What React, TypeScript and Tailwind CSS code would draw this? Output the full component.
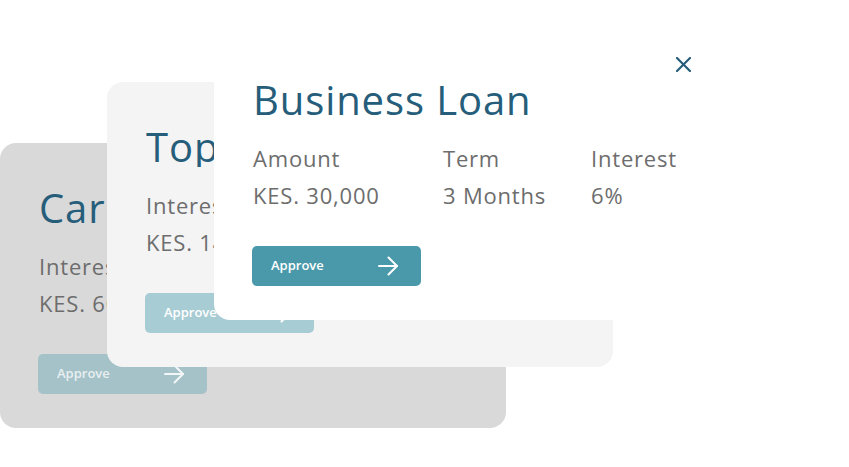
import React from "react";

type Col = { label: string; value: string; w: string };

function Arrow({ color }: { color: string }) {
  return (
    <svg width="20" height="20" viewBox="0 0 20 20" fill="none" stroke={color} strokeWidth="2" strokeLinecap="round" strokeLinejoin="round">
      <path d="M1 10h18" />
      <path d="M10.5 1.5 19 10l-8.5 8.5" />
    </svg>
  );
}

function Card({
  title,
  cols,
  cardClass,
  btnClass,
  btnText,
  arrow,
  close,
  clip,
}: {
  title: string;
  cols: Col[];
  cardClass: string;
  btnClass: string;
  btnText: string;
  arrow: string;
  close?: boolean;
  clip?: boolean;
}) {
  return (
    <div className={`absolute w-[506px] h-[285px] rounded-[16px] pl-[39px] pt-[45px] ${cardClass}`}>
      {close && (
        <div className="absolute left-[462px] top-[22px]">
          <svg width="15" height="15" viewBox="0 0 15 15" fill="none" stroke="#255d7a" strokeWidth="2.2" strokeLinecap="round">
            <path d="M1 1l13 13" />
            <path d="M14 1 1 14" />
          </svg>
        </div>
      )}
      <div className={clip ? "w-[68px] overflow-hidden" : ""}>
        <div className="h-[40px] leading-[40px] text-[40px] text-[#255d7a] whitespace-nowrap tracking-[0.9px]">{title}</div>
      </div>
      <div className="flex mt-[27px]">
        {cols.map((c, i) => (
          <div key={i} className={`${c.w} flex flex-col ${clip ? "overflow-hidden" : ""}`}>
            <div className="h-[22px] leading-[22px] text-[22px] text-[#6d6d6d] whitespace-nowrap tracking-[0.8px]">{c.label}</div>
            <div className="mt-[15px] h-[22px] leading-[22px] text-[22px] text-[#6d6d6d] whitespace-nowrap tracking-[0.8px]">{c.value}</div>
          </div>
        ))}
      </div>
      <div className={`mt-[40px] -ml-px w-[169px] h-[40px] rounded-[5px] flex items-center justify-between pl-[19px] pr-[23px] ${btnClass}`}>
        <span className={`text-[13px] font-semibold ${btnText}`}>Approve</span>
        <Arrow color={arrow} />
      </div>
    </div>
  );
}

export default function App() {
  return (
    <div
      className="relative w-[849px] h-[467px] bg-white overflow-hidden"
      style={{ fontFamily: '"Open Sans", "Noto Sans", sans-serif' }}
    >
      <div className="absolute left-0 top-[143px]">
        <Card
          title="Car Loan"
          cols={[{ label: "Interest", value: "KES. 60,000", w: "w-[68px]" }]}
          cardClass="bg-[#d9d9d9]"
          btnClass="bg-[#a5c2c8]"
          btnText="text-[#e8eff1]"
          arrow="#f2f6f7"
          clip
        />
      </div>
      <div className="absolute left-[107px] top-[82px]">
        <Card
          title="Top Up Loan"
          cols={[{ label: "Interest", value: "KES. 14,000", w: "w-[68px]" }]}
          cardClass="bg-[#f4f4f4]"
          btnClass="bg-[#a8ccd4]"
          btnText="text-white"
          arrow="#ffffff"
          clip
        />
      </div>
      <div className="absolute left-[214px] top-[35px]">
        <Card
          title="Business Loan"
          cols={[
            { label: "Amount", value: "KES. 30,000", w: "w-[190px]" },
            { label: "Term", value: "3 Months", w: "w-[148px]" },
            { label: "Interest", value: "6%", w: "w-[100px]" },
          ]}
          cardClass="bg-white"
          btnClass="bg-[#4a99aa]"
          btnText="text-white"
          arrow="#ffffff"
          close
        />
      </div>
    </div>
  );
}
